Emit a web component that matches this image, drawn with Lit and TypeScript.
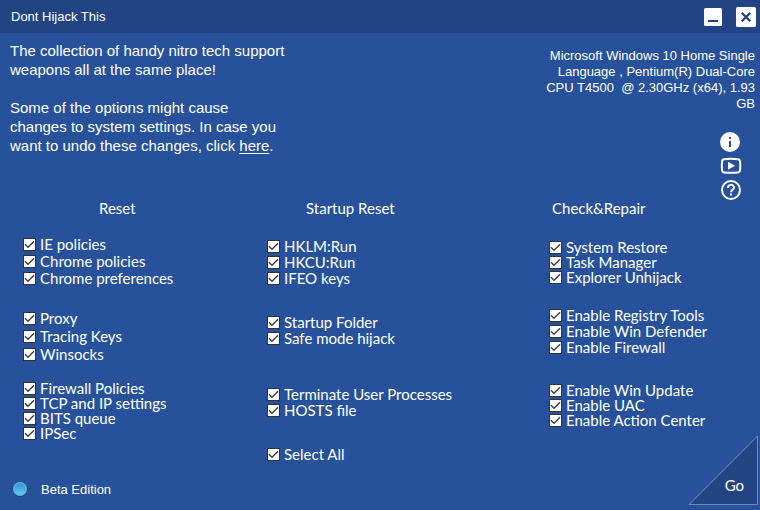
import { LitElement, html, css } from "lit";
import { customElement, state } from "lit/decorators.js";

interface Group {
  pitch: string;
  space: string;
  items: string[];
}

interface Column {
  kind: string;
  title: string;
  groups: Group[];
}

const COLUMNS: Column[] = [
  {
    kind: "reset",
    title: "Reset",
    groups: [
      { pitch: "wide", space: "", items: ["IE policies", "Chrome policies", "Chrome preferences"] },
      { pitch: "wider", space: "gap-m", items: ["Proxy", "Tracing Keys", "Winsocks"] },
      { pitch: "tight", space: "gap-s", items: ["Firewall Policies", "TCP and IP settings", "BITS queue", "IPSec"] },
    ],
  },
  {
    kind: "startup",
    title: "Startup Reset",
    groups: [
      { pitch: "normal", space: "", items: ["HKLM:Run", "HKCU:Run", "IFEO keys"] },
      { pitch: "normal", space: "gap-l", items: ["Startup Folder", "Safe mode hijack"] },
      { pitch: "normal", space: "gap-xl", items: ["Terminate User Processes", "HOSTS file"] },
    ],
  },
  {
    kind: "repair",
    title: "Check&Repair",
    groups: [
      { pitch: "tight", space: "", items: ["System Restore", "Task Manager", "Explorer Unhijack"] },
      { pitch: "normal", space: "gap-m", items: ["Enable Registry Tools", "Enable Win Defender", "Enable Firewall"] },
      { pitch: "tight", space: "gap-l", items: ["Enable Win Update", "Enable UAC", "Enable Action Center"] },
    ],
  },
];

const ALL = COLUMNS.flatMap((c) => c.groups.flatMap((g) => g.items));

@customElement("app-root")
export class AppRoot extends LitElement {
  @state() private selected = new Set<string>(ALL);

  static styles = css`
    :host {
      display: flex;
      flex-direction: column;
      position: relative;
      box-sizing: border-box;
      min-height: 100vh;
      background: #27529b;
      color: #fff;
      font-family: "Liberation Sans", Arial, sans-serif;
      font-size: 13px;
    }
    button {
      border: 0;
      padding: 0;
      margin: 0;
      background: none;
      color: inherit;
      font: inherit;
      cursor: pointer;
    }
    svg {
      display: block;
    }
    .titlebar {
      display: flex;
      align-items: center;
      justify-content: space-between;
      height: 33px;
      padding: 0 4px 0 11px;
      background: #224482;
    }
    .title {
      margin: 0;
      font-size: 13px;
      font-weight: 400;
      line-height: 31px;
    }
    .window-buttons {
      display: flex;
      align-items: center;
      gap: 14px;
    }
    .top {
      display: flex;
      justify-content: space-between;
      padding: 8px 5px 0 10px;
    }
    .intro {
      width: 290px;
      font-size: 15px;
      line-height: 19px;
    }
    .intro p {
      margin: 0 0 19px;
    }
    .intro a {
      color: inherit;
      text-decoration: underline;
      text-underline-offset: 2px;
    }
    .side {
      display: flex;
      flex-direction: column;
      align-items: flex-end;
      padding-top: 7px;
    }
    .system {
      width: 212px;
      margin: 0 0 20px;
      text-align: right;
      line-height: 16px;
      white-space: pre-wrap;
    }
    .links {
      display: flex;
      flex-direction: column;
      gap: 5px;
      padding-right: 13px;
    }
    .columns {
      display: grid;
      grid-template-columns: 244fr 282fr 211fr;
      padding-left: 23px;
      font-family: Lato, Carlito, sans-serif;
      font-size: 15px;
      line-height: 15px;
    }
    .heading {
      margin: 0;
      font-size: 15px;
      font-weight: 400;
      line-height: 16px;
    }
    .reset .heading {
      padding: 0 0 20px 76px;
    }
    .startup .heading {
      padding: 0 0 22px 39px;
    }
    .repair .heading {
      padding: 0 0 24px 3px;
    }
    .row {
      display: flex;
      align-items: center;
      gap: 4px;
      white-space: nowrap;
    }
    .tight .row {
      height: 15px;
    }
    .normal .row {
      height: 16px;
    }
    .wide .row {
      height: 17px;
    }
    .wider .row {
      height: 18px;
    }
    .gap-s {
      margin-top: 18px;
    }
    .gap-m {
      margin-top: 22px;
    }
    .gap-l {
      margin-top: 28px;
    }
    .gap-xl {
      margin-top: 40px;
    }
    .box {
      appearance: none;
      flex: none;
      box-sizing: border-box;
      width: 13px;
      height: 13px;
      margin: 0;
      border: 1px solid #333;
      background: #fff;
    }
    .box:checked {
      background: #fff
        url("data:image/svg+xml,%3Csvg xmlns='http://www.w3.org/2000/svg' viewBox='0 0 11 11'%3E%3Cpath d='M1 5.2L4 8.2L10 2.2' fill='none' stroke='%23404040' stroke-width='1.4'/%3E%3C/svg%3E")
        center / 11px 11px no-repeat;
    }
    .status {
      display: flex;
      align-items: center;
      gap: 13px;
      margin-top: auto;
      padding: 0 0 12px 12px;
      line-height: 17px;
    }
    .go {
      position: absolute;
      right: 2px;
      bottom: 5px;
      width: 70px;
      height: 70px;
    }
    .go svg {
      position: absolute;
      inset: 0;
    }
    .go-label {
      position: absolute;
      right: 14px;
      bottom: 12px;
      font-family: Lato, Carlito, sans-serif;
      font-size: 15px;
      line-height: 16px;
    }
  `;

  private toggle(name: string) {
    const next = new Set(this.selected);
    if (!next.delete(name)) next.add(name);
    this.selected = next;
  }

  private toggleAll() {
    this.selected = new Set(this.selected.size === ALL.length ? [] : ALL);
  }

  private renderGroup(group: Group) {
    return html`<div class="group ${group.pitch} ${group.space}">
      ${group.items.map(
        (name) => html`<label class="row">
          <input class="box" type="checkbox" .checked=${this.selected.has(name)} @change=${() => this.toggle(name)} />
          <span>${name}</span>
        </label>`,
      )}
    </div>`;
  }

  render() {
    return html`
      <header class="titlebar">
        <h1 class="title">Dont Hijack This</h1>
        <div class="window-buttons">
          <button aria-label="Minimize">
            <svg width="18" height="18" viewBox="0 0 18 18">
              <rect width="18" height="18" rx="1.5" fill="#fff" />
              <rect x="4" y="12" width="10" height="2" fill="#224482" />
            </svg>
          </button>
          <button aria-label="Close">
            <svg width="20" height="20" viewBox="0 0 20 20">
              <rect width="20" height="20" rx="1.5" fill="#fff" />
              <path d="M5.7 5.9L14.3 14.3M14.3 5.9L5.7 14.3" stroke="#224482" stroke-width="2.2" />
            </svg>
          </button>
        </div>
      </header>

      <section class="top">
        <div class="intro">
          <p>The collection of handy nitro tech support<br />weapons all at the same place!</p>
          <p>
            Some of the options might cause<br />changes to system settings. In case you<br />want to undo these changes,
            click <a href="#undo">here</a>.
          </p>
        </div>
        <div class="side">
          <p class="system">${"Microsoft Windows 10 Home Single Language , Pentium(R) Dual-Core CPU T4500  @ 2.30GHz (x64), 1.93 GB"}</p>
          <div class="links">
            <button aria-label="Information">
              <svg width="22" height="20" viewBox="0 0 22 20">
                <circle cx="10" cy="10" r="10" fill="#fff" />
                <rect x="9" y="5" width="2" height="2" fill="#27529b" />
                <rect x="9" y="9" width="2" height="6" fill="#27529b" />
              </svg>
            </button>
            <button aria-label="Video">
              <svg width="22" height="18" viewBox="0 0 22 18">
                <path
                  d="M4 2.2Q11 1.4 18 2.2Q20 2.4 20.1 5Q20.4 9 20.1 12.5Q20 15.2 18 15.4Q11 16.2 4 15.4Q2.1 15.2 2 12.5Q1.6 9 2 5Q2.1 2.4 4 2.2Z"
                  fill="none"
                  stroke="#fff"
                  stroke-width="2"
                />
                <path d="M8 4.8L15 8.8L8 12.8Z" fill="#fff" />
              </svg>
            </button>
            <button aria-label="Help">
              <svg width="22" height="20" viewBox="0 0 22 20">
                <circle cx="11" cy="10" r="9" fill="none" stroke="#fff" stroke-width="2" />
                <path d="M8 8C8 3.9 14 3.9 14 7.6C14 9.8 11 9.8 11 12.3" fill="none" stroke="#fff" stroke-width="2" />
                <rect x="10" y="13.5" width="2" height="2" fill="#fff" />
              </svg>
            </button>
          </div>
        </div>
      </section>

      <main class="columns">
        ${COLUMNS.map(
          (column) => html`<section class="column ${column.kind}">
            <h2 class="heading">${column.title}</h2>
            ${column.groups.map((g) => this.renderGroup(g))}
            ${column.kind === "startup"
              ? html`<div class="group normal gap-l">
                  <label class="row">
                    <input
                      class="box"
                      type="checkbox"
                      .checked=${this.selected.size === ALL.length}
                      @change=${() => this.toggleAll()}
                    />
                    <span>Select All</span>
                  </label>
                </div>`
              : ""}
          </section>`,
        )}
      </main>

      <footer class="status">
        <svg width="16" height="17" viewBox="0 0 16 17" aria-hidden="true">
          <defs>
            <linearGradient id="orb" x1="0" y1="0" x2="0" y2="1">
              <stop offset="0" stop-color="#2e97dc" />
              <stop offset="1" stop-color="#6cc4f2" />
            </linearGradient>
          </defs>
          <circle cx="8" cy="9" r="7" fill="#1c4a50" />
          <circle cx="8" cy="8" r="6.4" fill="url(#orb)" stroke="#4fbcd8" stroke-width="1.2" />
        </svg>
        <span>Beta Edition</span>
      </footer>

      <button class="go">
        <svg width="70" height="70" viewBox="0 0 70 70" aria-hidden="true">
          <path d="M1 69.5L69.5 1V69.5Z" fill="#224482" stroke="#7088b8" stroke-width="1" />
        </svg>
        <span class="go-label">Go</span>
      </button>
    `;
  }
}
